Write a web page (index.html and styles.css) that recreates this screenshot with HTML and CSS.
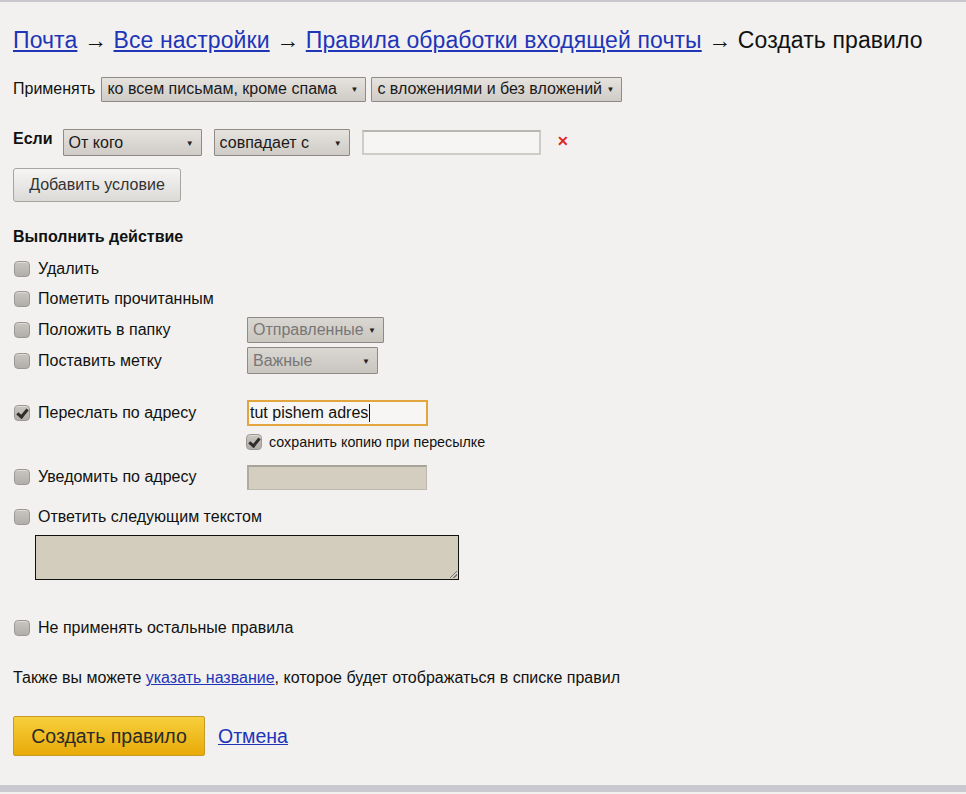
FILE: index.html
```html
<!DOCTYPE html>
<html lang="ru">
<head>
<meta charset="utf-8">
<title>Создать правило</title>
<link rel="stylesheet" href="styles.css">
</head>
<body>
<div class="page">
  <h1 class="crumbs">
    <a href="#">Почта</a> <span class="arr">→</span> <a href="#">Все настройки</a> <span class="arr">→</span> <a href="#">Правила обработки входящей почты</a> <span class="arr">→</span> Создать правило
  </h1>

  <div class="apply-row">
    <span class="lbl">Применять</span>
    <span class="select sel-all">ко всем письмам, кроме спама<span class="caret">▼</span></span>
    <span class="select sel-att">с вложениями и без вложений<span class="caret">▼</span></span>
  </div>

  <div class="if-row">
    <span class="lbl bold">Если</span>
    <span class="select sel-from">От кого<span class="caret">▼</span></span>
    <span class="select sel-match">совпадает с<span class="caret">▼</span></span>
    <span class="input cond-input"></span>
    <span class="remove">✕</span>
  </div>

  <button class="btn-gray">Добавить условие</button>

  <div class="section-title">Выполнить действие</div>

  <div class="actions">
    <div class="act r1"><span class="cb"></span><span>Удалить</span></div>
    <div class="act r2"><span class="cb"></span><span>Пометить прочитанным</span></div>
    <div class="act r3"><span class="cb"></span><span class="grow">Положить в папку</span><span class="select dis sel-folder">Отправленные<span class="caret">▼</span></span></div>
    <div class="act r4"><span class="cb"></span><span class="grow">Поставить метку</span><span class="select dis sel-label">Важные<span class="caret">▼</span></span></div>

    <div class="act r5"><span class="cb on"></span><span class="grow">Переслать по адресу</span><span class="input focus">tut pishem adres<span class="cursor"></span></span></div>
    <div class="sub"><span class="cb on"></span><span>сохранить копию при пересылке</span></div>

    <div class="act r6"><span class="cb"></span><span class="grow">Уведомить по адресу</span><span class="input dis-in"></span></div>
    <div class="act r7"><span class="cb"></span><span>Ответить следующим текстом</span></div>
    <div class="textarea"><span class="grip"></span></div>

    <div class="act r8"><span class="cb"></span><span>Не применять остальные правила</span></div>
  </div>

  <p class="note">Также вы можете <a href="#">указать название</a>, которое будет отображаться в списке правил</p>

  <div class="buttons">
    <button class="btn-yellow">Создать правило</button>
    <a href="#" class="cancel">Отмена</a>
  </div>
</div>
<div class="bottom-bar"></div>
</body>
</html>
```

FILE: styles.css
```css
html, body {
  margin: 0;
  padding: 0;
}
body {
  background: #f2f1ef;
  border-top: 2px solid #c9c8cc;
  font-family: "Liberation Sans", Arial, sans-serif;
  font-size: 16px;
  color: #111;
  min-height: 792px;
  box-sizing: border-box;
  display: flex;
  flex-direction: column;
}
.page {
  flex: 1;
  padding-left: 13px;
}
.bottom-bar {
  height: 7px;
  background: #c9c9cf;
}
a {
  color: #2134b9;
}

.crumbs {
  margin: 25px 0 0;
  font-size: 23px;
  font-weight: normal;
  line-height: 26px;
  color: #111;
  white-space: nowrap;
  letter-spacing: 0.1px;
}
.crumbs a {
  color: #1f35b8;
}
.arr {
  color: #111;
}

.apply-row {
  margin-top: 23px;
  display: flex;
  align-items: center;
  height: 26px;
}
.apply-row .lbl {
  margin-right: 6px;
}
.lbl {
  margin-right: 4px;
}
.bold {
  font-weight: bold;
}

.select {
  position: relative;
  display: inline-flex;
  align-items: center;
  box-sizing: border-box;
  height: 25px;
  padding-left: 5px;
  border: 1px solid #8e8a86;
  border-radius: 1px;
  background: linear-gradient(#e6e3df, #cfcbc6);
  color: #1a1a1a;
  font-size: 16px;
  white-space: nowrap;
}
.caret {
  position: absolute;
  right: 7px;
  top: 50%;
  transform: translateY(-50%);
  font-size: 8px;
  color: #222;
}
.sel-all { width: 265px; }
.sel-att { width: 251px; margin-left: 5px; }

.if-row {
  margin-top: 27px;
  display: flex;
  align-items: center;
  height: 27px;
}
.if-row .lbl {
  margin-right: 10px;
  align-self: flex-start;
  margin-top: 1px;
}
.sel-from { width: 139px; height: 27px; }
.sel-match { width: 136px; height: 27px; margin-left: 12px; }
.input {
  display: inline-flex;
  align-items: center;
  box-sizing: border-box;
  height: 25px;
  border: 1px solid #b8b4ae;
  border-top-color: #a09b95;
  background: #f4f3f1;
  font-size: 16px;
}
.cond-input {
  width: 179px;
  margin-left: 12px;
  border: 2px solid #cfccc7;
  border-top-color: #b9b5b0;
  background: #f6f5f3;
}
.remove {
  margin-left: 16px;
  color: #e0261c;
  font-weight: bold;
  font-size: 14px;
  margin-top: -4px;
}

.btn-gray {
  display: block;
  margin-top: 12px;
  width: 168px;
  height: 34px;
  border: 1px solid #a8a5a1;
  border-radius: 3px;
  background: linear-gradient(#f6f5f4, #dcdad7);
  font-family: inherit;
  font-size: 16px;
  color: #333;
  padding: 0;
}

.section-title {
  margin-top: 26px;
  font-weight: bold;
  line-height: 18px;
}

.actions {
  margin-top: 8px;
}
.act {
  display: flex;
  align-items: center;
}
.act .grow {
  width: 209px;
}
.r1, .r2 { height: 30px; }
.r3 { height: 31px; }
.r4 { height: 31px; }
.r5 { height: 28px; margin-top: 23px; }
.r6 { height: 26px; margin-top: 11px; }
.r7 { height: 25px; margin-top: 14px; }
.r8 { height: 24px; margin-top: 36px; }

.cb {
  display: inline-block;
  box-sizing: border-box;
  width: 16px;
  height: 16px;
  margin: 0 8px 0 1px;
  border: 1px solid #9c9893;
  border-radius: 4px;
  background: linear-gradient(#c9c5c0, #b1ada8);
  box-shadow: inset 0 1px 0 rgba(255,255,255,0.35);
  position: relative;
  flex: none;
}
.cb.on::after {
  content: "";
  position: absolute;
  left: 4px;
  top: 1px;
  width: 4px;
  height: 8px;
  border: solid #2f2d2b;
  border-width: 0 3px 3px 0;
  transform: rotate(40deg);
}

.sel-folder { width: 137px; height: 26px; color: #777; }
.sel-label { width: 131px; height: 27px; color: #777; }
.dis { background: linear-gradient(#dad6d1, #c9c5bf); }

.focus {
  width: 181px;
  height: 26px;
  border: 2px solid #e3a63f;
  background: #f7f6f4;
  padding-left: 1px;
  color: #111;
}
.cursor {
  display: inline-block;
  width: 1px;
  height: 18px;
  background: #111;
  margin-left: 1px;
}

.sub {
  display: flex;
  align-items: center;
  height: 22px;
  margin-top: 4px;
  padding-left: 232px;
  font-size: 14.3px;
}
.sub .cb {
  margin-right: 7px;
}

.dis-in {
  width: 180px;
  height: 25px;
  border: 1px solid #bdb8ad;
  border-top: 2px solid #a8a398;
  border-left: 2px solid #b0ab9f;
  background: #d3cebf;
}

.textarea {
  position: relative;
  margin: 6px 0 0 22px;
  width: 424px;
  height: 45px;
  box-sizing: border-box;
  border: 1px solid #111;
  background: #d3cdbd;
}
.grip {
  position: absolute;
  right: 1px;
  bottom: 1px;
  width: 7px;
  height: 7px;
  background: linear-gradient(135deg, transparent 45%, #777 45%, #777 55%, transparent 55%, transparent 70%, #777 70%, #777 80%, transparent 80%);
}

.note {
  margin: 28px 0 0;
  line-height: 20px;
}
.note a {
  color: #2134b9;
}

.buttons {
  margin-top: 28px;
  display: flex;
  align-items: center;
}
.btn-yellow {
  width: 192px;
  height: 40px;
  border: 1px solid #c59c27;
  border-radius: 2px;
  background: linear-gradient(#f6cf3c, #e9aa08);
  font-family: inherit;
  font-size: 19.5px;
  color: #2a2a2a;
  padding: 0;
}
.cancel {
  margin-left: 13px;
  font-size: 19.5px;
  color: #2134b9;
}
```
